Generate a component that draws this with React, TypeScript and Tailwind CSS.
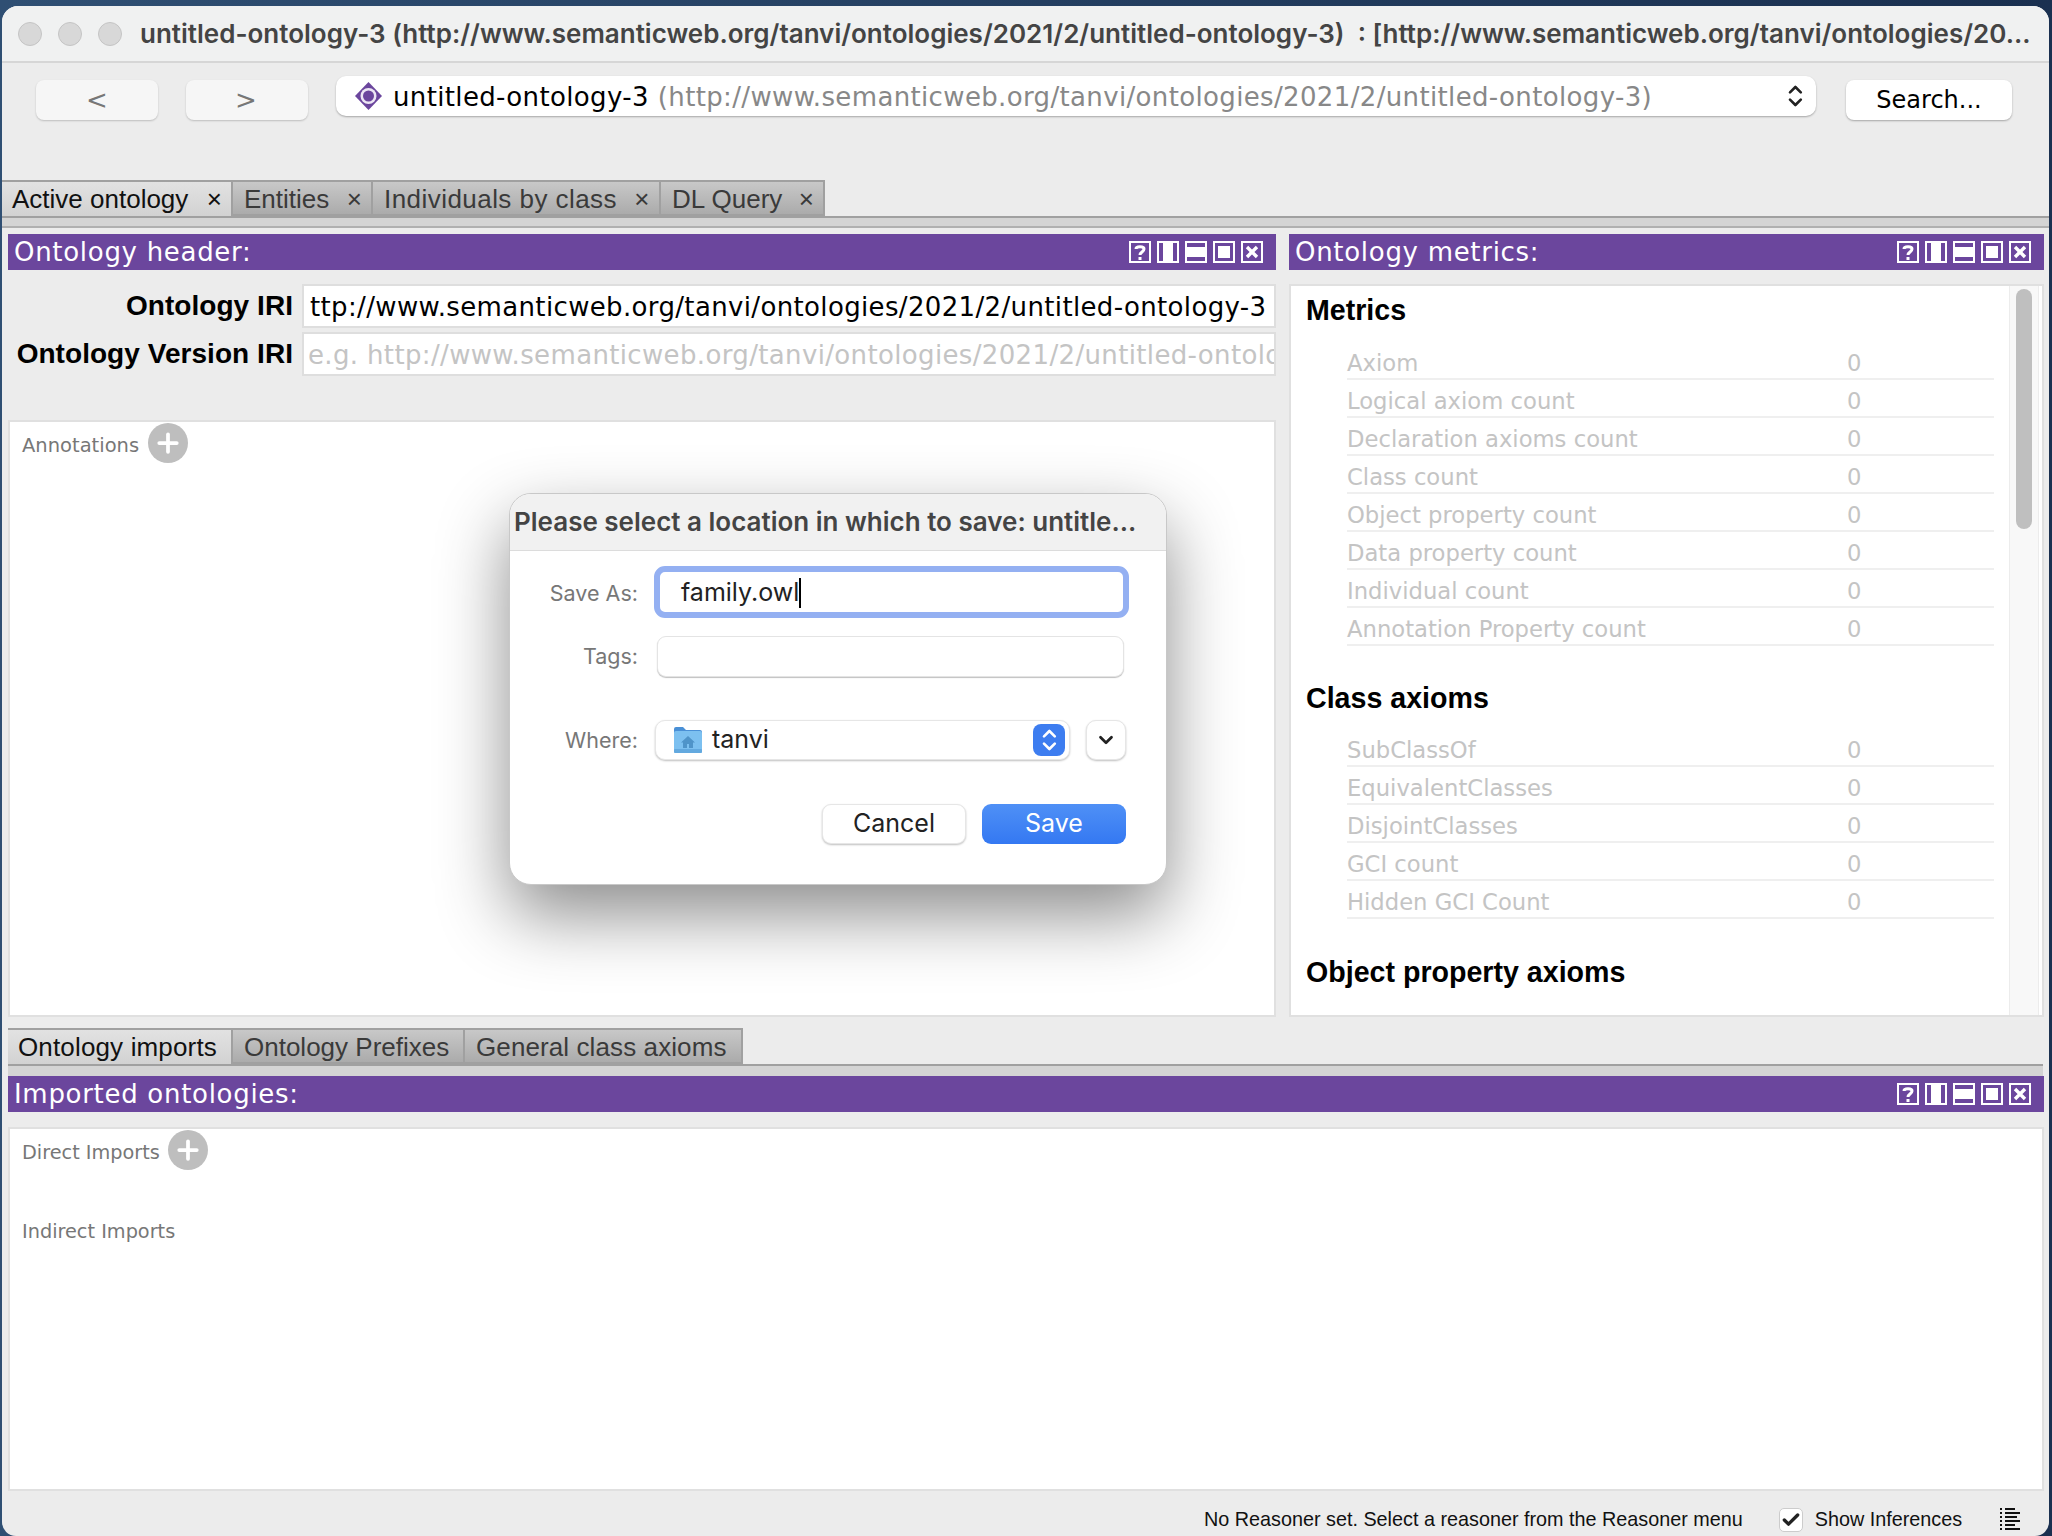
import React from 'react';
import { Plus, Check, ChevronDown } from 'lucide-react';

const URL = 'http://www.semanticweb.org/tanvi/ontologies/2021/2/untitled-ontology-3';

const classAxioms = ['SubClassOf', 'EquivalentClasses', 'DisjointClasses', 'GCI count', 'Hidden GCI Count'];
const metrics = [
  'Axiom',
  'Logical axiom count',
  'Declaration axioms count',
  'Class count',
  'Object property count',
  'Data property count',
  'Individual count',
  'Annotation Property count',
];

function UpDown({ color, size = 22 }: { color: string; size?: number }) {
  return (
    <svg width={size * 0.7} height={size} viewBox="0 0 14 20" fill="none" stroke={color} strokeWidth="2.2" strokeLinecap="round" strokeLinejoin="round">
      <path d="M2.5 7 7 2.5 11.5 7" />
      <path d="M2.5 13 7 17.5 11.5 13" />
    </svg>
  );
}

function ViewIcons() {
  return (
    <div className="flex gap-[6px]">
      <svg width="22" height="22" viewBox="0 0 22 22" fill="none" stroke="white" strokeWidth="2">
        <rect x="1" y="1" width="20" height="20" />
        <path d="M7 8c0-3 8-3 8 0 0 3-4 3-4 6" strokeWidth="3" />
        <path d="M11 16v3" strokeWidth="3" />
      </svg>
      <svg width="22" height="22" viewBox="0 0 22 22" fill="none" stroke="white" strokeWidth="2">
        <rect x="1" y="1" width="20" height="20" />
        <rect x="7" y="1" width="8" height="20" fill="white" />
      </svg>
      <svg width="22" height="22" viewBox="0 0 22 22" fill="none" stroke="white" strokeWidth="2">
        <rect x="1" y="1" width="20" height="20" />
        <rect x="1" y="7" width="20" height="8" fill="white" />
      </svg>
      <svg width="22" height="22" viewBox="0 0 22 22" fill="none" stroke="white" strokeWidth="2">
        <rect x="1" y="1" width="20" height="20" />
        <rect x="5" y="5" width="12" height="12" fill="white" stroke="none" />
      </svg>
      <svg width="22" height="22" viewBox="0 0 22 22" fill="none" stroke="white" strokeWidth="2">
        <rect x="1" y="1" width="20" height="20" />
        <path d="M6 6l10 10M16 6 6 16" strokeWidth="3.4" />
      </svg>
    </div>
  );
}

function ViewHeader({ title }: { title: string }) {
  return (
    <div className="flex h-[36px] shrink-0 items-center justify-between bg-[#6b469d] pl-[6px] pr-[13px]">
      <span className="text-[26px] leading-none tracking-[0.7px] text-white">{title}</span>
      <ViewIcons />
    </div>
  );
}

function AddButton() {
  return (
    <span className="flex h-[40px] w-[40px] items-center justify-center rounded-full bg-[#bebebe] text-white">
      <Plus size={30} strokeWidth={3} />
    </span>
  );
}

function WindowTab({ label, className, active, close }: { label: string; className: string; active?: boolean; close?: boolean }) {
  return (
    <div
      className={`flex h-full items-center justify-between border-t-2 border-r-2 border-[#a0a0a0] pr-[9px] font-['Liberation_Sans',sans-serif] text-[26px] ${className} ${
        active
          ? 'bg-linear-to-b from-[#e2e2e2] to-[#d2d2d2] pl-[10px] text-[#111]'
          : 'border-b-2 bg-linear-to-b from-[#c8c8c8] to-[#ababab] pl-[11px] pt-[2px] text-[#3a3a3a]'
      }`}
    >
      <span>{label}</span>
      {close && <span className="text-[26px] leading-none">×</span>}
    </div>
  );
}

function MetricRow({ label }: { label: string }) {
  return (
    <div className="ml-[56px] mr-[15px] flex h-[38px] items-center border-b-2 border-[#efefef] pt-[7px] text-[22.7px] text-[#c4c4c4]">
      <span className="w-[500px]">{label}</span>
      <span>0</span>
    </div>
  );
}

function Heading({ children, className }: { children: React.ReactNode; className: string }) {
  return <div className={`pl-[15px] font-['Liberation_Sans',sans-serif] text-[28.6px] font-bold text-black ${className}`}>{children}</div>;
}

function SaveDialog() {
  return (
    <div className="absolute left-[509px] top-[493px] flex h-[392px] w-[658px] flex-col overflow-hidden rounded-[22px] border border-[#c8c8c8] bg-white font-['Inter',sans-serif] shadow-[0_30px_70px_rgba(0,0,0,0.45)]">
      <div className="flex h-[57px] shrink-0 items-center border-b border-[#dcdcdc] bg-[#f1f1f1] pb-[2px] pl-[4px] text-[26px] font-semibold text-[#444]">
        Please select a location in which to save: untitle...
      </div>
      <div className="flex flex-col pr-[40px] text-[21.5px]">
        <div className="mt-[15px] flex h-[52px] items-center">
          <span className="w-[128px] pt-[3px] text-right text-[#777]">Save As:</span>
          <div className="-mr-[3px] ml-[16px] flex h-[52px] flex-1 items-center rounded-[11px] border-[6px] border-[#94b0f2] bg-white pl-[21px] pt-[2px] text-[25px] text-[#222]">
            family.owl
            <span className="h-[30px] w-[2px] bg-black" />
          </div>
        </div>
        <div className="mt-[18px] flex h-[41px] items-center">
          <span className="w-[128px] text-right text-[#777]">Tags:</span>
          <div className="ml-[19px] mr-[2px] h-[41px] flex-1 rounded-[9px] border border-[#e4e4e4] bg-white shadow-[0_1px_1px_rgba(0,0,0,0.25)]" />
        </div>
        <div className="mt-[43px] flex h-[40px] items-center">
          <span className="w-[128px] text-right text-[#777]">Where:</span>
          <div className="ml-[17px] flex h-[40px] w-[415px] items-center rounded-[10px] border border-[#e6e6e6] bg-white pl-[17px] pr-[4px] shadow-[0_1px_2px_rgba(0,0,0,0.25)]">
            <svg width="30" height="28" viewBox="0 0 30 28">
              <path d="M1 3a2 2 0 0 1 2-2h7l3 3h14a2 2 0 0 1 2 2v4H1z" fill="#4a90d6" />
              <rect x="1" y="5" width="28" height="22" rx="2" fill="#7cc0f0" />
              <path d="M15 10 8 16.500h2V22h4v-4h2v4h4v-5.500h2z" fill="#4f94c9" />
              <rect x="1" y="23" width="28" height="4" rx="1" fill="#63a9df" />
            </svg>
            <span className="ml-[9px] text-[25px] text-[#222]">tanvi</span>
            <span className="ml-auto flex h-[32px] w-[32px] items-center justify-center rounded-[8px] bg-[#3d7df0]">
              <UpDown color="white" size={24} />
            </span>
          </div>
          <div className="ml-[16px] flex h-[40px] w-[40px] items-center justify-center rounded-[10px] border border-[#e6e6e6] bg-white shadow-[0_1px_2px_rgba(0,0,0,0.25)]">
            <ChevronDown size={22} strokeWidth={3} className="text-[#222]" />
          </div>
        </div>
        <div className="mt-[44px] flex justify-end gap-[16px] text-[25px]">
          <div className="flex h-[40px] w-[144px] items-center justify-center rounded-[9px] border border-[#e6e6e6] bg-white text-[#222] shadow-[0_1px_2px_rgba(0,0,0,0.25)]">Cancel</div>
          <div className="flex h-[40px] w-[144px] items-center justify-center rounded-[9px] bg-linear-to-b from-[#4f90f6] to-[#3478f2] text-white">Save</div>
        </div>
      </div>
    </div>
  );
}

export default function App() {
  return (
    <div className="relative h-[1536px] w-[2052px] overflow-hidden bg-linear-to-r from-[#2f4f73] to-[#1a3050] pl-[2px] pr-[3px] pt-[6px] font-['DejaVu_Sans',sans-serif]">
      <div className="flex h-[1530px] flex-col overflow-hidden rounded-t-[16px] rounded-b-[14px] bg-[#ececec]">
        {/* Title bar */}
        <div className="flex h-[57px] shrink-0 items-center border-b-2 border-[#d6d6d6] bg-[#f0f1f1]">
          <div className="ml-[16px] flex gap-[16px]">
            <span className="h-[24px] w-[24px] rounded-full border border-[#c4c4c4] bg-[#d8d8d8]" />
            <span className="h-[24px] w-[24px] rounded-full border border-[#c4c4c4] bg-[#d8d8d8]" />
            <span className="h-[24px] w-[24px] rounded-full border border-[#c4c4c4] bg-[#d8d8d8]" />
          </div>
          <span className="ml-[18px] whitespace-nowrap font-['Inter',sans-serif] text-[26px] font-semibold text-[#444]">
            untitled-ontology-3 ({URL}) &nbsp;: [http://www.semanticweb.org/tanvi/ontologies/20...
          </span>
        </div>

        {/* Toolbar */}
        <div className="flex h-[117px] shrink-0 items-start pl-[34px] pt-[13px]">
          <div className="mt-[4px] flex h-[40px] w-[122px] items-center justify-center rounded-[8px] bg-[#f6f6f6] text-[26px] text-[#777] shadow-[0_1px_2px_rgba(0,0,0,0.2)]">&lt;</div>
          <div className="ml-[28px] mt-[4px] flex h-[40px] w-[122px] items-center justify-center rounded-[8px] bg-[#f6f6f6] pr-[2px] text-[26px] text-[#777] shadow-[0_1px_2px_rgba(0,0,0,0.2)]">&gt;</div>
          <div className="ml-[28px] flex h-[40px] w-[1480px] items-center rounded-[10px] bg-white pl-[19px] pr-[12px] text-[26px] tracking-[0.35px] shadow-[0_1px_2px_rgba(0,0,0,0.3)]">
            <svg width="27" height="28" viewBox="0 0 27 28">
              <path d="M13.500 0 27 14 13.500 28 0 14z" fill="#6b469d" />
              <circle cx="13.500" cy="14" r="8" fill="#ece6f4" />
              <circle cx="13.500" cy="14" r="5.500" fill="#6b469d" />
            </svg>
            <span className="ml-[11px] pt-[2px] text-black">untitled-ontology-3</span>
            <span className="ml-[9px] pt-[2px] text-[#888]">({URL})</span>
            <span className="ml-auto">
              <UpDown color="#222" size={24} />
            </span>
          </div>
          <div className="ml-[30px] mt-[4px] flex h-[40px] w-[166px] items-center justify-center rounded-[8px] bg-white text-[24px] text-black shadow-[0_1px_2px_rgba(0,0,0,0.3)]">Search...</div>
        </div>

        {/* Main tabs */}
        <div className="flex h-[38px] shrink-0 border-b-2 border-[#a0a0a0]">
          <WindowTab label="Active ontology" className="w-[231px]" active close />
          <WindowTab label="Entities" className="w-[140px]" close />
          <WindowTab label="Individuals by class" className="w-[288px] tracking-[0.45px]" close />
          <WindowTab label="DL Query" className="w-[164px]" close />
        </div>
        <div className="h-[10px] shrink-0 border-b-2 border-[#b0b0b0] bg-[#d4d4d4]" />

        {/* Upper views */}
        <div className="grid h-[787px] shrink-0 grid-cols-[1268px_755px] gap-[13px] pl-[6px] pr-[5px] pt-[6px]">
          <div className="flex flex-col">
            <ViewHeader title="Ontology header:" />
            <div className="mt-[14px] flex items-center">
              <span className="w-[285px] text-right font-['Liberation_Sans',sans-serif] text-[28px] font-bold tracking-[0.05px] text-black">Ontology IRI</span>
              <div className="ml-[9px] flex h-[44px] flex-1 items-center overflow-hidden whitespace-nowrap border-2 border-[#dedede] bg-white pl-[6px] pt-[2px] text-[26px] tracking-[0.35px] text-black">
                ttp://www.semanticweb.org/tanvi/ontologies/2021/2/untitled-ontology-3
              </div>
            </div>
            <div className="mt-[4px] flex items-center">
              <span className="w-[285px] text-right font-['Liberation_Sans',sans-serif] text-[28px] font-bold tracking-[0.05px] text-black">Ontology Version IRI</span>
              <div className="ml-[9px] flex h-[44px] flex-1 items-center overflow-hidden whitespace-nowrap border-2 border-[#dedede] bg-white pl-[4px] pt-[2px] text-[26px] tracking-[0.35px] text-[#c4c4c4]">
                e.g. http://www.semanticweb.org/tanvi/ontologies/2021/2/untitled-ontology-3
              </div>
            </div>
            <div className="mt-[44px] flex-1 border-2 border-[#e0e0e0] bg-white">
              <div className="flex items-center pl-[12px] pt-[1px]">
                <span className="pt-[6px] text-[19.5px] text-[#777]">Annotations</span>
                <span className="ml-[9px]">
                  <AddButton />
                </span>
              </div>
            </div>
          </div>

          <div className="flex flex-col">
            <ViewHeader title="Ontology metrics:" />
            <div className="mt-[14px] flex flex-1 overflow-hidden border-2 border-[#e0e0e0] bg-white">
              <div className="min-w-0 flex-1">
                <Heading className="h-[56px] pt-[3px]">Metrics</Heading>
                {metrics.map((m) => (
                  <MetricRow key={m} label={m} />
                ))}
                <Heading className="flex h-[83px] items-center pt-[22px]">Class axioms</Heading>
                {classAxioms.map((m) => (
                  <MetricRow key={m} label={m} />
                ))}
                <Heading className="flex h-[96px] items-center pt-[11px]">Object property axioms</Heading>
              </div>
              <div className="mr-[3px] w-[30px] shrink-0 border-x border-[#ececec] bg-[#f8f8f8] px-[6px] pt-[3px]">
                <div className="h-[240px] rounded-full bg-[#bfbfbf]" />
              </div>
            </div>
          </div>
        </div>

        {/* Lower tabs */}
        <div className="mx-[6px] mt-[13px] flex h-[38px] shrink-0 border-b-2 border-[#a0a0a0]">
          <WindowTab label="Ontology imports" className="w-[225px] tracking-[0.15px]" active />
          <WindowTab label="Ontology Prefixes" className="w-[232px]" />
          <WindowTab label="General class axioms" className="w-[278px] tracking-[0.1px]" />
        </div>
        <div className="mx-[6px] h-[10px] shrink-0 bg-[#d4d4d4]" />

        {/* Imported ontologies */}
        <div className="flex h-[415px] shrink-0 flex-col pl-[6px] pr-[5px]">
          <ViewHeader title="Imported ontologies:" />
          <div className="mt-[15px] flex-1 border-2 border-[#e0e0e0] bg-white pl-[12px]">
            <div className="flex items-center pt-[1px]">
              <span className="pt-[6px] text-[19.300px] text-[#777]">Direct Imports</span>
              <span className="ml-[8px]">
                <AddButton />
              </span>
            </div>
            <div className="mt-[48px] text-[19.300px] text-[#777]">Indirect Imports</div>
          </div>
        </div>

        {/* Status bar */}
        <div className="flex flex-1 items-center pt-[12px] font-['Liberation_Sans',sans-serif] text-[19.8px] text-[#111]">
          <span className="ml-[1202px]">No Reasoner set. Select a reasoner from the Reasoner menu</span>
          <span className="ml-[36px] flex h-[24px] w-[24px] items-center justify-center rounded-[5px] border border-[#ccc] bg-white">
            <Check size={20} strokeWidth={4} className="text-[#222]" />
          </span>
          <span className="ml-[12px]">Show Inferences</span>
          <svg className="ml-[38px]" width="20" height="23" viewBox="0 0 20 23" fill="#111">
            <rect x="0" y="0" width="2" height="2" />
            <rect x="5" y="0" width="10" height="2" />
            <rect x="0" y="4" width="2" height="2" />
            <rect x="5" y="4" width="15" height="2" />
            <rect x="0" y="8" width="2" height="2" />
            <rect x="5" y="8" width="12" height="2" />
            <rect x="0" y="12" width="2" height="2" />
            <rect x="5" y="12" width="15" height="2" />
            <rect x="0" y="16" width="2" height="2" />
            <rect x="5" y="16" width="10" height="2" />
            <rect x="0" y="20" width="2" height="2" />
            <rect x="5" y="20" width="15" height="2" />
          </svg>
        </div>
      </div>

      <SaveDialog />
    </div>
  );
}
